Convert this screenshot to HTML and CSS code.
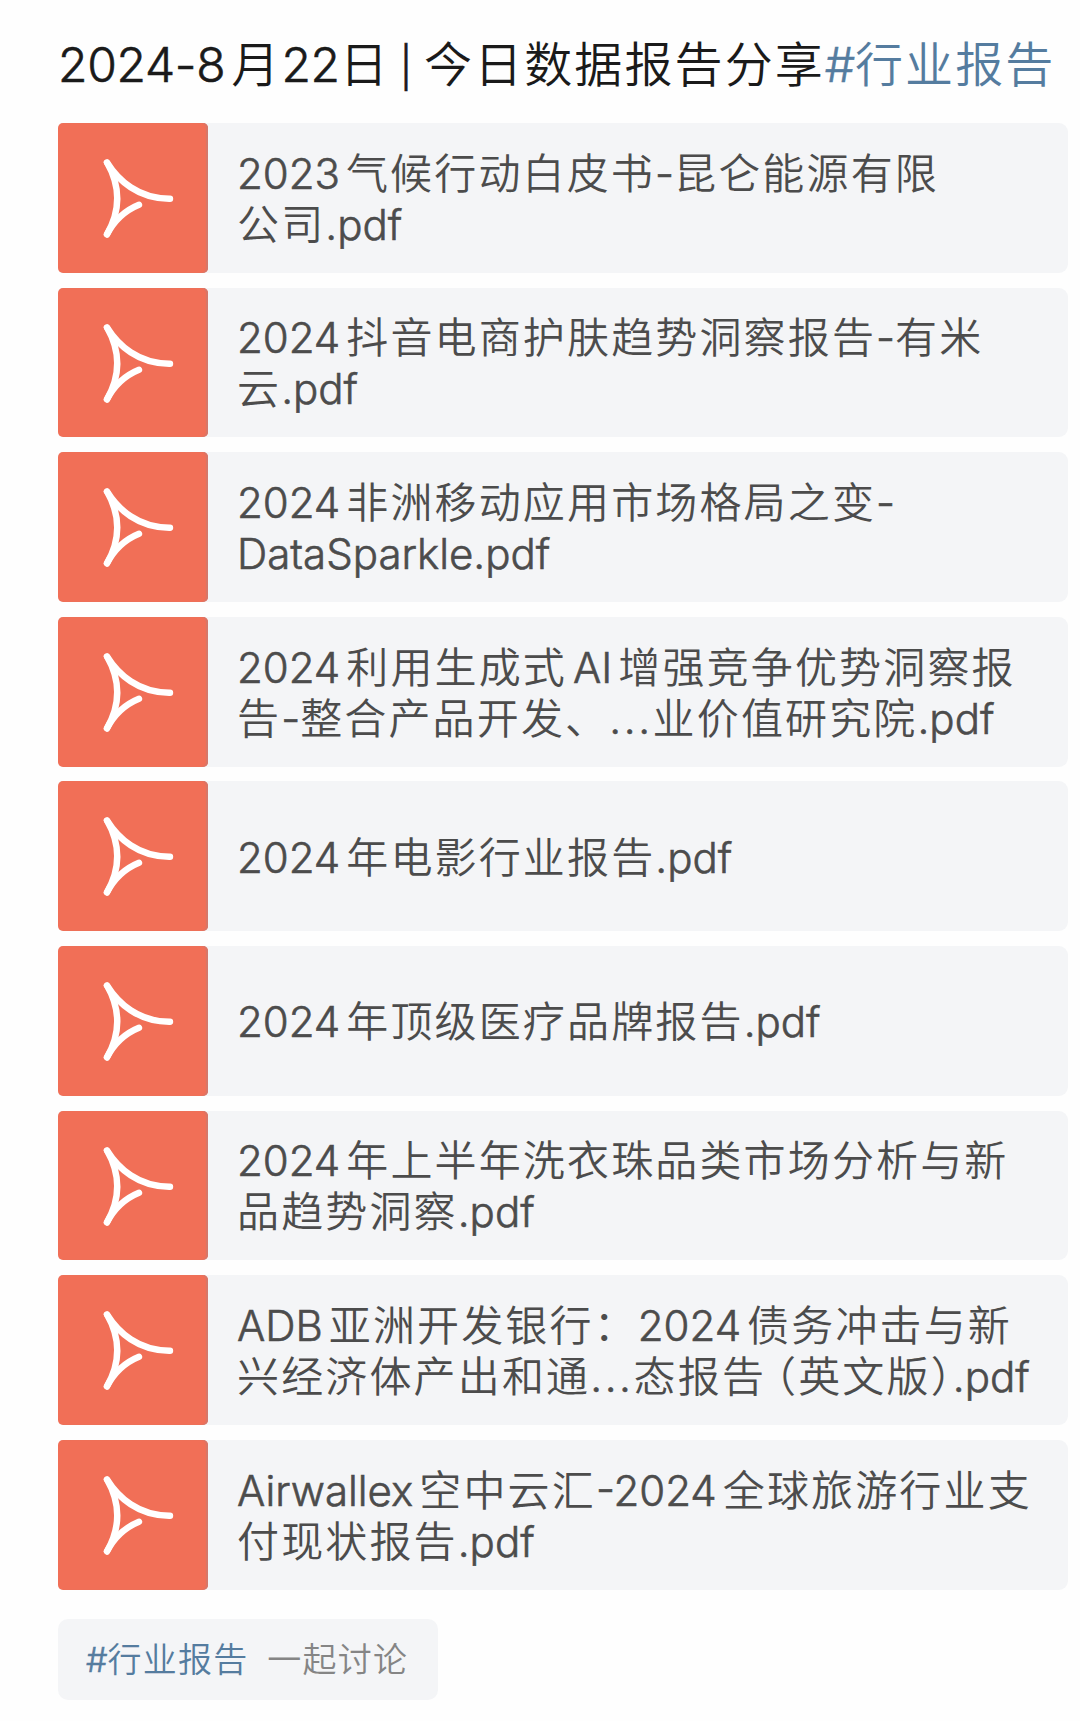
FILE: index.html
```html
<!DOCTYPE html>
<html lang="zh-CN">
<head>
    <meta charset="UTF-8">
    <meta name="viewport" content="width=device-width, initial-scale=1.0">
    <title>今日数据报告分享</title>
    <link rel="stylesheet" href="styles.css">
</head>
<body>

    <!-- PDF icon, shared by every row -->
    <svg class="icon-defs" width="0" height="0">
        <symbol id="pdf" viewBox="0 0 150 150">
            <path d="M49 39.5Q69.5 75.5 49 111.3"/>
            <path d="M49 39.5C60 57 80 76 112 75.7"/>
            <path d="M49 111.3C57 96 68 87 81 81.7"/>
        </symbol>
    </svg>

    <h1 class="title"><span class="en">2024-8</span><span class="gap">月</span><span class="en">22</span>日<span class="en bar">|</span>今日数据报告分享<a class="topic"><span class="en">#</span>行业报告</a></h1>

    <div class="file-list">
        <div class="file">
            <div class="file-icon"><svg><use href="#pdf"/></svg></div>
            <div class="file-name">
                <div><span class="en">2023</span><span class="gap">气候行动白皮书</span><span class="en">-</span>昆仑能源有限</div>
                <div>公司<span class="en">.pdf</span></div>
            </div>
        </div>
        <div class="file">
            <div class="file-icon"><svg><use href="#pdf"/></svg></div>
            <div class="file-name">
                <div><span class="en">2024</span><span class="gap">抖音电商护肤趋势洞察报告</span><span class="en">-</span>有米</div>
                <div>云<span class="en">.pdf</span></div>
            </div>
        </div>
        <div class="file">
            <div class="file-icon"><svg><use href="#pdf"/></svg></div>
            <div class="file-name">
                <div><span class="en">2024</span><span class="gap">非洲移动应用市场格局之变</span><span class="en">-</span></div>
                <div><span class="en">DataSparkle.pdf</span></div>
            </div>
        </div>
        <div class="file">
            <div class="file-icon"><svg><use href="#pdf"/></svg></div>
            <div class="file-name">
                <div><span class="en">2024</span><span class="gap">利用生成式</span><span class="en gap">AI</span><span class="gap">增强竞争优势洞察报</span></div>
                <div>告<span class="en">-</span>整合产品开发、<span class="dots">...</span>业价值研究院<span class="en">.pdf</span></div>
            </div>
        </div>
        <div class="file">
            <div class="file-icon"><svg><use href="#pdf"/></svg></div>
            <div class="file-name">
                <div><span class="en">2024</span><span class="gap">年电影行业报告</span><span class="en">.pdf</span></div>
            </div>
        </div>
        <div class="file">
            <div class="file-icon"><svg><use href="#pdf"/></svg></div>
            <div class="file-name">
                <div><span class="en">2024</span><span class="gap">年顶级医疗品牌报告</span><span class="en">.pdf</span></div>
            </div>
        </div>
        <div class="file">
            <div class="file-icon"><svg><use href="#pdf"/></svg></div>
            <div class="file-name">
                <div><span class="en">2024</span><span class="gap">年上半年洗衣珠品类市场分析与新</span></div>
                <div>品趋势洞察<span class="en">.pdf</span></div>
            </div>
        </div>
        <div class="file">
            <div class="file-icon"><svg><use href="#pdf"/></svg></div>
            <div class="file-name">
                <div><span class="en">ADB</span><span class="gap">亚洲开发银行：</span><span class="en">2024</span><span class="gap">债务冲击与新</span></div>
                <div>兴经济体产出和通<span class="dots">...</span>态报告<span class="paren-open">（</span>英文版<span class="paren-close">）</span><span class="en">.pdf</span></div>
            </div>
        </div>
        <div class="file">
            <div class="file-icon"><svg><use href="#pdf"/></svg></div>
            <div class="file-name">
                <div><span class="en">Airwallex</span><span class="gap">空中云汇</span><span class="en">-2024</span><span class="gap">全球旅游行业支</span></div>
                <div>付现状报告<span class="en">.pdf</span></div>
            </div>
        </div>
    </div>

    <div class="discuss">
        <a class="topic"><span class="en">#</span>行业报告</a>
        <span class="discuss-text">一起讨论</span>
    </div>

</body>
</html>
```

FILE: styles.css
```css
body {
    font-family: "Noto Sans CJK SC", sans-serif;
    font-weight: 350;
    background-color: #fefefe;
    margin: 0;
    padding: 28px 12px 0 58px;
}
.icon-defs {
    display: block;
}
.en, .dots {
    font-family: Inter, "Noto Sans CJK SC", sans-serif;
    font-weight: 350;
    line-height: 1;
    letter-spacing: 0;
    -webkit-text-stroke: 0.6px currentColor;
}
.gap {
    margin-left: 6px;
}
.title {
    margin: 0;
    height: 95px;
    line-height: 66px;
    font-size: 48px;
    font-weight: 350;
    letter-spacing: 2.1px;
    color: #1a1a1a;
    white-space: nowrap;
}
.title .en {
    letter-spacing: -0.3px;
}
.title .bar {
    margin: 0 12px 0 10px;
    font-size: 40px;
}
.topic {
    color: #557c9f;
}

/* File rows */
.file-list {
    display: flex;
    flex-direction: column;
    gap: 14.8px;
}
.file {
    display: flex;
    height: 149.8px;
    background-color: #f4f5f7;
    border-radius: 5px 9px 9px 5px;
}
.file-icon {
    width: 150px;
    flex-shrink: 0;
    background-color: #f16f57;
    border-radius: 5px;
    box-shadow: inset -2px 0 1px #d5776a;
}
.file-icon svg {
    display: block;
    width: 150px;
    height: 150px;
    fill: none;
    stroke: #fff;
    stroke-width: 6.4;
    stroke-linecap: round;
}
.file-name {
    display: flex;
    flex-direction: column;
    justify-content: center;
    padding: 0 0 4px 29px;
    font-size: 42px;
    line-height: 51px;
    letter-spacing: 2.15px;
    color: #4c4c4c;
    white-space: nowrap;
}
.file-name .dots {
    letter-spacing: 2.6px;
}
.paren-open {
    margin-left: -12px;
}
.paren-close {
    margin-right: -22px;
}

/* Topic chip */
.discuss {
    display: flex;
    align-items: center;
    gap: 19px;
    box-sizing: border-box;
    width: 380px;
    height: 81px;
    margin-top: 29px;
    padding: 0 0 3px 28px;
    background-color: #f4f5f7;
    border-radius: 10px;
    font-size: 34px;
    letter-spacing: 1.2px;
    white-space: nowrap;
}
.discuss-text {
    color: #858585;
}
```
